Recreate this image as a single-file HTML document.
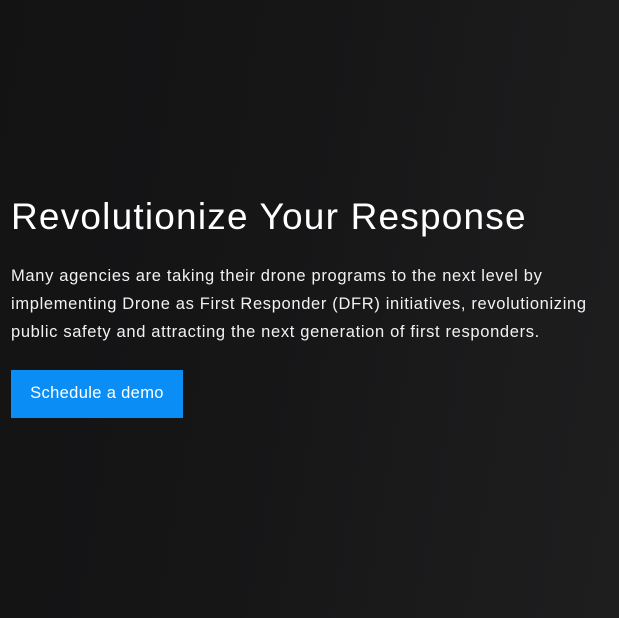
<!DOCTYPE html>
<html><head><style>
html,body{margin:0;padding:0;}
body{width:619px;height:618px;overflow:hidden;background:#161617;font-family:"Liberation Sans",sans-serif;position:relative;}
.bg{position:absolute;inset:0;background:linear-gradient(100deg,#131314 0%,#161617 45%,#1b1b1c 75%,#1e1e1f 100%);}
h1{position:absolute;left:11px;top:196px;margin:0;font-weight:400;font-size:37px;color:#fff;letter-spacing:1.2px;white-space:nowrap;}
p{position:absolute;left:11px;top:262px;margin:0;width:590px;font-size:16.5px;line-height:28px;color:#f2f2f2;letter-spacing:0.66px;}
.btn{position:absolute;left:11px;top:370px;width:172px;height:48px;background:#0a8ef5;color:#fff;font-size:16.5px;line-height:46px;text-align:center;letter-spacing:0.35px;}
</style></head><body>
<div class="bg"></div>
<h1>Revolutionize Your Response</h1>
<p>Many agencies are taking their drone programs to the next level by implementing Drone as First Responder (DFR) initiatives, revolutionizing public safety and attracting the next generation of first responders.</p>
<div class="btn">Schedule a demo</div>
</body></html>
